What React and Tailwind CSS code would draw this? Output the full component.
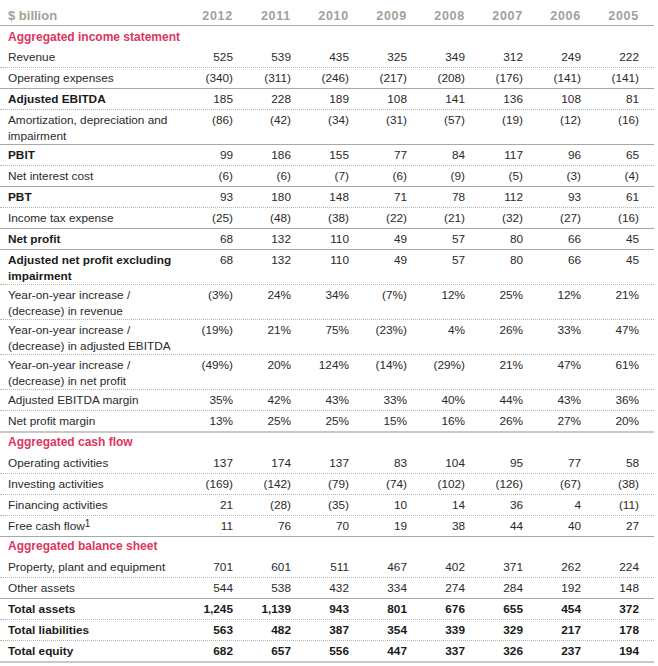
const years = ['2012', '2011', '2010', '2009', '2008', '2007', '2006', '2005'];

const rows = [
  { section: 'Aggregated income statement', first: true },
  { label: ['Revenue'], v: ['525', '539', '435', '325', '349', '312', '249', '222'], line: 'dot' },
  { label: ['Operating expenses'], v: ['(340)', '(311)', '(246)', '(217)', '(208)', '(176)', '(141)', '(141)'], line: 'solid' },
  { label: ['Adjusted EBITDA'], bold: true, v: ['185', '228', '189', '108', '141', '136', '108', '81'], line: 'dot' },
  { label: ['Amortization, depreciation and', 'impairment'], v: ['(86)', '(42)', '(34)', '(31)', '(57)', '(19)', '(12)', '(16)'], line: 'solid' },
  { label: ['PBIT'], bold: true, v: ['99', '186', '155', '77', '84', '117', '96', '65'], line: 'dot' },
  { label: ['Net interest cost'], v: ['(6)', '(6)', '(7)', '(6)', '(9)', '(5)', '(3)', '(4)'], line: 'solid' },
  { label: ['PBT'], bold: true, v: ['93', '180', '148', '71', '78', '112', '93', '61'], line: 'dot' },
  { label: ['Income tax expense'], v: ['(25)', '(48)', '(38)', '(22)', '(21)', '(32)', '(27)', '(16)'], line: 'solid' },
  { label: ['Net profit'], bold: true, v: ['68', '132', '110', '49', '57', '80', '66', '45'], line: 'solid' },
  { label: ['Adjusted net profit excluding', 'impairment'], bold: true, v: ['68', '132', '110', '49', '57', '80', '66', '45'], line: 'dot' },
  { label: ['Year-on-year increase /', '(decrease) in revenue'], v: ['(3%)', '24%', '34%', '(7%)', '12%', '25%', '12%', '21%'], line: 'dot' },
  { label: ['Year-on-year increase /', '(decrease) in adjusted EBITDA'], v: ['(19%)', '21%', '75%', '(23%)', '4%', '26%', '33%', '47%'], line: 'dot' },
  { label: ['Year-on-year increase /', '(decrease) in net profit'], v: ['(49%)', '20%', '124%', '(14%)', '(29%)', '21%', '47%', '61%'], line: 'dot' },
  { label: ['Adjusted EBITDA margin'], v: ['35%', '42%', '43%', '33%', '40%', '44%', '43%', '36%'], line: 'dot' },
  { label: ['Net profit margin'], v: ['13%', '25%', '25%', '15%', '16%', '26%', '27%', '20%'], line: 'thick' },
  { section: 'Aggregated cash flow' },
  { label: ['Operating activities'], v: ['137', '174', '137', '83', '104', '95', '77', '58'], line: 'dot' },
  { label: ['Investing activities'], v: ['(169)', '(142)', '(79)', '(74)', '(102)', '(126)', '(67)', '(38)'], line: 'dot' },
  { label: ['Financing activities'], v: ['21', '(28)', '(35)', '10', '14', '36', '4', '(11)'], line: 'dot' },
  { label: ['Free cash flow'], sup: '1', v: ['11', '76', '70', '19', '38', '44', '40', '27'], line: 'solid' },
  { section: 'Aggregated balance sheet' },
  { label: ['Property, plant and equipment'], v: ['701', '601', '511', '467', '402', '371', '262', '224'], line: 'dot' },
  { label: ['Other assets'], v: ['544', '538', '432', '334', '274', '284', '192', '148'], line: 'solid' },
  { label: ['Total assets'], bold: true, boldNums: true, v: ['1,245', '1,139', '943', '801', '676', '655', '454', '372'], line: 'dot' },
  { label: ['Total liabilities'], bold: true, boldNums: true, v: ['563', '482', '387', '354', '339', '329', '217', '178'], line: 'dot' },
  { label: ['Total equity'], bold: true, boldNums: true, v: ['682', '657', '556', '447', '337', '326', '237', '194'], line: 'thick' },
];

const lineClass = {
  dot: 'border-b border-dotted border-[#b4b4b4]',
  solid: 'border-b border-solid border-[#a8a8a8]',
  thick: 'border-b-2 border-solid border-[#c9c9c9]',
};

const Row = ({ row }) => {
  if (row.section) {
    return (
      <div className={`pl-2 ${row.first ? 'pt-[3px] pb-[2px]' : 'pt-[1px] pb-[3px]'} text-[12px] leading-4 font-bold text-[#dc3660]`}>
        {row.section}
      </div>
    );
  }
  const twoLine = row.label.length > 1;
  return (
    <div className={`flex ${twoLine ? 'pt-[2px]' : 'py-[2px]'} ${lineClass[row.line]}`}>
      <div className={`w-[175px] shrink-0 pl-2 whitespace-nowrap ${row.bold ? 'font-bold text-[#1a1a1a]' : 'text-[#2a2a2a]'}`}>
        {row.label.map((l, i) => (
          <div key={i}>
            {l}
            {row.sup && <span className="text-[10px] align-top relative top-[1px] leading-none">{row.sup}</span>}
          </div>
        ))}
      </div>
      {row.v.map((n, i) => (
        <div key={i} className={`w-[58px] shrink-0 text-right ${row.boldNums ? 'font-bold text-[#1a1a1a]' : 'text-[#2a2a2a]'}`}>
          {n}
        </div>
      ))}
    </div>
  );
};

const App = () => {
  return (
    <div className="w-[654px] bg-white font-['Liberation_Sans',Arial,sans-serif] text-[11.8px] leading-4">
      <div className="flex pt-[8px] pb-[1px] border-b border-solid border-[#b3aea9] text-[#a69e97] font-bold">
        <div className="w-[175px] shrink-0 pl-2 text-[13px]">$ billion</div>
        {years.map((y) => (
          <div key={y} className="w-[58px] shrink-0 text-right text-[12.5px] tracking-[0.06em]">
            {y}
          </div>
        ))}
      </div>
      {rows.map((r, i) => (
        <Row key={i} row={r} />
      ))}
    </div>
  );
};

export default App;
